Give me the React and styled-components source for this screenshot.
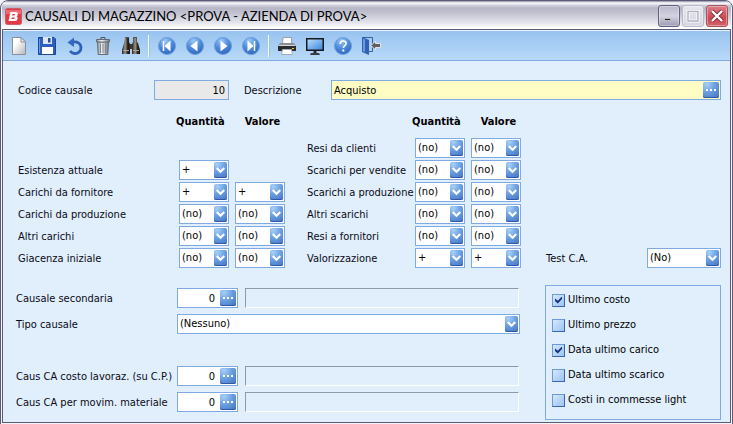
import React from "react";
import styled, { createGlobalStyle, css } from "styled-components";

const Global = createGlobalStyle`
  * { box-sizing: border-box; }
  body { margin: 0; background: #f4f4f8; }
  body, button, input, select {
    font-family: "DejaVu Sans Condensed", "Noto Sans", sans-serif;
    font-size: 11px;
    line-height: 14px;
    color: #000;
  }
`;

const line = "#7fabe2";

const Window = styled.div`
  display: flex;
  flex-direction: column;
  min-height: 100vh;
  border: 1px solid #5d5a78;
  border-radius: 8px 8px 0 0;
  background: #f6f6fa;
  padding: 0 1px 1px;
  overflow: hidden;
`;

const TitleBar = styled.header`
  display: flex;
  align-items: center;
  gap: 3px;
  height: 28px;
  padding: 2px 3px 0;
  background: linear-gradient(#8d8ba5 0, #ffffff 2px, #d4d4de 4px, #b6b6c8 7px, #c2c2d0 12px, #e6e6ee 22px, #ffffff 27px);
`;

const Title = styled.h1`
  flex: 1;
  margin: 0;
  font: 400 13px/18px Lato, "Noto Sans", sans-serif;
  white-space: nowrap;
`;

const WindowButton = styled.button`
  display: flex;
  align-items: center;
  justify-content: center;
  width: 22px;
  height: 22px;
  padding: 0;
  border: 1px solid ${(p) => (p.$tone === "close" ? "#a8505c" : p.$tone === "dim" ? "#b9b9c9" : "#62627e")};
  border-radius: 3px;
  background: ${(p) =>
    p.$tone === "close"
      ? "linear-gradient(#d9808a, #cb4850 60%, #d4626a)"
      : p.$tone === "dim"
        ? "linear-gradient(#e6e6ee, #d6d6e2)"
        : "linear-gradient(#b8b8cc, #d2d2e0 50%, #9c9cb4)"};
  box-shadow: inset 0 0 0 1px rgba(255, 255, 255, 0.35);
`;

const WindowButtons = styled.div`
  display: flex;
  gap: 2px;
`;

const Frame = styled.div`
  flex: 1;
  display: flex;
  flex-direction: column;
  border: 1px solid #5d5a78;
  background: #e1effd;
`;

const Toolbar = styled.nav`
  display: flex;
  align-items: center;
  height: 31px;
  padding-left: 2px;
  border-top: 1px solid #e8f3ff;
  border-bottom: 1px solid #7fabe2;
  background: linear-gradient(#98c3ef, #b8d9f9);
`;

const ToolButton = styled.button`
  display: flex;
  align-items: center;
  justify-content: center;
  width: 28px;
  height: 26px;
  padding: 0;
  border: 0;
  background: none;
`;

const Separator = styled.span`
  width: 2px;
  height: 22px;
  margin: 0 3px;
  border-left: 1px solid #f4faff;
  border-right: 1px solid #9fc4ec;
`;

const Form = styled.form`
  flex: 1;
  display: flex;
  flex-direction: column;
  padding: 19px 9px 2px 13px;
`;

const TopRow = styled.div`
  display: grid;
  grid-template-columns: 136px 75px 15px 87px 1fr;
  align-items: center;
  padding-left: 2px;
`;

const Label = styled.label`
  padding-top: 2px;
  white-space: nowrap;
  color: #0a0a14;
`;

const DescriptionLabel = styled(Label)`
  grid-column: 4;
`;

const fieldBox = css`
  width: 100%;
  height: 20px;
  margin: 0;
  border: 1px solid ${line};
  border-radius: 0;
  outline: 0;
  background: #fff;
`;

const TextBox = styled.input`
  ${fieldBox}
  padding: 0 ${(p) => (p.$lookup ? 22 : 3)}px 0 2px;
  text-align: ${(p) => p.$align || "left"};
  ${(p) => p.$tone === "locked" && "background: #e9e9e9;"}
  ${(p) => p.$tone === "active" && "background: #fffcc4;"}
`;

const FieldWrap = styled.div`
  position: relative;
  height: 20px;
  min-width: 0;
`;

const blueTile = css`
  position: absolute;
  top: 2px;
  right: 2px;
  display: flex;
  align-items: center;
  justify-content: center;
  height: 16px;
  padding: 0;
  border: 0;
  border-radius: 2px;
  background: radial-gradient(circle at 25% 15%, #a8d0f6 0, #6a9fe2 45%, #4272c0 100%);
  box-shadow: inset 0 -1px 0 #3158a8;
`;

const LookupButton = styled.button`
  ${blueTile}
  width: 16px;
`;

const ArrowTile = styled.span`
  ${blueTile}
  width: 13px;
  pointer-events: none;
`;

const NativeSelect = styled.select`
  ${fieldBox}
  appearance: none;
  padding: 0 16px 0 2px;
`;

const Matrices = styled.div`
  display: flex;
  align-items: flex-end;
  padding: 14px 0 0 2px;
`;

const Matrix = styled.section`
  display: flex;
  flex-direction: column;
  gap: 2px;
  margin-right: 22px;
`;

const MatrixHead = styled.div`
  display: flex;
  gap: 20px;
  height: 16px;
  margin-bottom: 6px;
  padding-left: ${(p) => p.$labelWidth + 3}px;
  font-weight: bold;
  line-height: 16px;
`;

const MatrixRow = styled.div`
  display: grid;
  grid-template-columns: ${(p) => p.$labelWidth}px 50px 50px;
  gap: 6px;
  align-items: center;
  height: 20px;
`;

const TestRow = styled.div`
  flex: 1;
  display: grid;
  grid-template-columns: 1fr 74px;
  align-items: center;
  padding-left: 3px;
`;

const Bottom = styled.div`
  display: grid;
  grid-template-columns: 1fr 176px;
  gap: 25px;
  margin-top: 17px;
`;

const Details = styled.div`
  display: flex;
  flex-direction: column;
  gap: 32px;
  padding-top: 3px;
`;

const DetailGroup = styled.div`
  display: flex;
  flex-direction: column;
  gap: 6px;
`;

const DetailRow = styled.div`
  display: grid;
  grid-template-columns: ${(p) => (p.$wide ? "161px 1fr" : "161px 61px 1fr")};
  align-items: center;
`;

const Display = styled.output`
  height: 20px;
  margin: 0 1px 0 7px;
  border: 1px solid;
  border-color: #8f9aa8 #fff #fff #8f9aa8;
`;

const Checks = styled.fieldset`
  display: flex;
  flex-direction: column;
  gap: 11px;
  min-width: 0;
  margin: 0;
  padding: 7px 6px 12px;
  border: 1px solid ${line};
`;

const CheckLabel = styled.label`
  display: flex;
  align-items: center;
  gap: 3px;
  height: 14px;
  white-space: nowrap;
`;

const CheckBox = styled.input`
  appearance: none;
  display: flex;
  justify-content: center;
  width: 13px;
  height: 13px;
  margin: 0;
  border: 1px solid #5284c8;
  border-color: #6a9adb #3565b4 #3565b4 #6a9adb;
  background: linear-gradient(135deg, #d4e8fc, #9cc4f0);
  &:checked::after {
    content: "";
    width: 7px;
    height: 7px;
    margin-top: 2px;
    background: #16307c;
    clip-path: polygon(0 30%, 40% 60%, 100% 0, 100% 35%, 40% 100%, 0 65%);
  }
`;

const Svg = ({ w = 20, h = 20, children }) => (
  <svg width={w} height={h} viewBox={`0 0 ${w} ${h}`} fill="none" aria-hidden="true">
    {children}
  </svg>
);

const DefsSvg = styled.svg`
  position: absolute;
`;

const Defs = () => (
  <DefsSvg width="0" height="0" aria-hidden="true">
    <defs>
      <linearGradient id="paper" x1="0" y1="0" x2="1" y2="1">
        <stop offset="0.3" stopColor="#fff" />
        <stop offset="1" stopColor="#b4b6bc" />
      </linearGradient>
      <linearGradient id="metal" x1="0" y1="0" x2="1" y2="0">
        <stop offset="0" stopColor="#8d949c" />
        <stop offset="0.4" stopColor="#f4f6f8" />
        <stop offset="1" stopColor="#6e757e" />
      </linearGradient>
      <linearGradient id="dark" x1="0" y1="0" x2="1" y2="0">
        <stop offset="0" stopColor="#25221f" />
        <stop offset="0.4" stopColor="#9b958a" />
        <stop offset="0.7" stopColor="#2c2824" />
        <stop offset="1" stopColor="#14110f" />
      </linearGradient>
      <linearGradient id="screen" x1="0" y1="0" x2="1" y2="1">
        <stop offset="0" stopColor="#b8dcff" />
        <stop offset="1" stopColor="#3f86dc" />
      </linearGradient>
      <radialGradient id="ball" cx="0.4" cy="0.2" r="0.85">
        <stop offset="0" stopColor="#9cc8f6" />
        <stop offset="0.5" stopColor="#4f8cdc" />
        <stop offset="1" stopColor="#2c62b8" />
      </radialGradient>
    </defs>
  </DefsSvg>
);

const NewIcon = () => (
  <Svg>
    <path d="M3.500 1.500H12L16.500 6V18.500H3.500Z" fill="url(#paper)" stroke="#8b8f97" />
    <path d="M12 1.500V6H16.500Z" fill="#e9ebee" stroke="#8b8f97" />
  </Svg>
);
const SaveIcon = () => (
  <Svg>
    <path d="M1.500 1.500H17L18.500 3V18.500H1.500Z" fill="#2b5fc0" stroke="#1f4797" />
    <path d="M2.500 3V17" stroke="#6c9ae6" />
    <path d="M6 1H15V8H6Z" fill="#dde6f2" />
    <path d="M11 2H13.500V6.500H11Z" fill="#244b9c" />
    <path d="M5 11H16V18H5Z" fill="#fff" />
  </Svg>
);
const UndoIcon = () => (
  <Svg>
    <path d="M7 6.300C12 4.800 16 7.500 16 11.800C16 15.500 13 17.800 9.500 17.500C7.500 17.300 6 16.300 5 15" stroke="#2f62b8" strokeWidth="2.800" />
    <path d="M2.500 6.500L9 1.500V11Z" fill="#3369c0" />
  </Svg>
);
const TrashIcon = () => (
  <Svg>
    <path d="M4.500 6H15.500L14.800 18.500H5.200Z" fill="url(#metal)" stroke="#646b74" />
    <path d="M7.500 7.500V17M10 7.500V17M12.500 7.500V17" stroke="#7c848e" />
    <path d="M3.500 3.500H16.500V6H3.500Z" fill="url(#metal)" stroke="#646b74" />
    <path d="M8 3V1.500H12V3" stroke="#4e555d" />
  </Svg>
);
const FindIcon = () => (
  <Svg>
    <path d="M4 2H8V6L9 8V18H1V14L3 7Z" fill="url(#dark)" />
    <path d="M12 2H16V6L17 7L19 14V18H11V8L12 6Z" fill="url(#dark)" />
    <path d="M8.500 8H11.500V13H8.500Z" fill="#3d3832" />
    <path d="M4 1.500H8M12 1.500H16" stroke="#5b554d" />
    <path d="M2 14.500H8M12 14.500H18" stroke="#aaa499" />
  </Svg>
);
const Ball = ({ children }) => (
  <Svg>
    <circle cx="10" cy="10" r="8.500" fill="url(#ball)" stroke="#6a9ee0" />
    {children}
  </Svg>
);
const FirstIcon = () => (
  <Ball>
    <path d="M13.500 4.500V15.500L7.500 10Z" fill="#fff" />
    <path d="M6.500 5V15" stroke="#fff" strokeWidth="1.500" />
  </Ball>
);
const PrevIcon = () => (
  <Ball>
    <path d="M12.500 4.500V15.500L5.500 10Z" fill="#fff" />
  </Ball>
);
const NextIcon = () => (
  <Ball>
    <path d="M7.500 4.500V15.500L14.500 10Z" fill="#fff" />
  </Ball>
);
const LastIcon = () => (
  <Ball>
    <path d="M6.500 4.500V15.500L12.500 10Z" fill="#fff" />
    <path d="M13.500 5V15" stroke="#fff" strokeWidth="1.500" />
  </Ball>
);
const PrintIcon = () => (
  <Svg>
    <path d="M6 1.500H14.500V8H5.500Z" fill="#fff" stroke="#9a9ea5" />
    <path d="M3 7H17L19 10V14H1V10Z" fill="#8c9096" />
    <path d="M1 10H19V15H1Z" fill="#2a2c30" />
    <path d="M2 9.500H18" stroke="#d5d8dc" />
    <path d="M15 12H17V13H15Z" fill="#d8d25a" />
    <path d="M5.500 13.500H14.500L15.500 18.500H4.500Z" fill="#fff" stroke="#a8acb2" />
  </Svg>
);
const ScreenIcon = () => (
  <Svg>
    <path d="M1 2H19V15H1Z" fill="#17191d" />
    <path d="M2.500 3.500H17.500V13.500H2.500Z" fill="url(#screen)" />
    <path d="M8.500 15H11.500V17H8.500Z" fill="#2a2c30" />
    <path d="M6 17H14L15 19H5Z" fill="#3a3c42" />
  </Svg>
);
const HelpIcon = () => (
  <Ball>
    <path d="M7.200 8C7.200 6 8.500 5 10.200 5C12 5 13.100 6.100 13.100 7.500C13.100 9.500 10.300 9.600 10.300 12" stroke="#fff" strokeWidth="1.600" />
    <path d="M9.300 13.500H11.300V15.500H9.300Z" fill="#fff" />
  </Ball>
);
const ExitIcon = () => (
  <Svg>
    <path d="M1.500 1.500H11.500V15.500H8" stroke="#3c5f9c" />
    <path d="M1 1L8 4V19L1 16Z" fill="#2e63b4" />
    <path d="M2 2.500L4 3.500V16L2 15.300Z" fill="#6d9be0" />
    <path d="M10 9.500L14.500 5V7.500H19.500V11.500H14.500V14Z" fill="#5e5e62" stroke="#e4e4e4" />
  </Svg>
);

const Chevron = () => (
  <Svg w={9} h={8}>
    <path d="M0.700 2L4.500 5.700L8.300 2" stroke="#fff" strokeWidth="2.200" />
  </Svg>
);
const Dots = () => (
  <Svg w={10} h={2}>
    <path d="M0 0H2V2H0ZM4 0H6V2H4ZM8 0H10V2H8Z" fill="#fff" />
  </Svg>
);

const LogoIcon = () => (
  <Svg w={17} h={17}>
    <rect x="0.500" y="0.500" width="16" height="16" rx="2" fill="#e23a44" stroke="#c8606a" />
    <path d="M1 2H16V6H1Z" fill="#ee6a70" />
    <path fillRule="evenodd" d="M5.500 4H11C13.500 4 13.500 7.500 11.500 8.200C13.600 9 12.800 13 10 13H3.500ZM7.500 6L7.200 7.500H9.600L10 6ZM6.800 9.500L6.500 11H9.300L9.800 9.500Z" fill="#fff" />
  </Svg>
);

const tools = [
  [["Nuovo", NewIcon], ["Salva", SaveIcon], ["Ripristina", UndoIcon], ["Elimina", TrashIcon], ["Cerca", FindIcon]],
  [["Primo", FirstIcon], ["Precedente", PrevIcon], ["Successivo", NextIcon], ["Ultimo", LastIcon]],
  [["Stampa", PrintIcon], ["Video", ScreenIcon], ["Guida", HelpIcon], ["Esci", ExitIcon]],
];

const carichi = [
  null,
  ["Esistenza attuale", "+"],
  ["Carichi da fornitore", "+", "+"],
  ["Carichi da produzione", "(no)", "(no)"],
  ["Altri carichi", "(no)", "(no)"],
  ["Giacenza iniziale", "(no)", "(no)"],
];

const scarichi = [
  ["Resi da clienti", "(no)", "(no)"],
  ["Scarichi per vendite", "(no)", "(no)"],
  ["Scarichi a produzione", "(no)", "(no)"],
  ["Altri scarichi", "(no)", "(no)"],
  ["Resi a fornitori", "(no)", "(no)"],
  ["Valorizzazione", "+", "+"],
];

const flags = [
  ["Ultimo costo", true],
  ["Ultimo prezzo", false],
  ["Data ultimo carico", true],
  ["Data ultimo scarico", false],
  ["Costi in commesse light", false],
];

function Select({ id, value, label }) {
  return (
    <FieldWrap>
      <NativeSelect id={id} aria-label={label} defaultValue={value}>
        <option>{value}</option>
      </NativeSelect>
      <ArrowTile>
        <Chevron />
      </ArrowTile>
    </FieldWrap>
  );
}

function Lookup({ id, name, ...rest }) {
  return (
    <FieldWrap>
      <TextBox id={id} $lookup {...rest} />
      <LookupButton type="button" aria-label={`Cerca ${name}`}>
        <Dots />
      </LookupButton>
    </FieldWrap>
  );
}

function MatrixBlock({ prefix, rows, labelWidth }) {
  return (
    <Matrix>
      <MatrixHead $labelWidth={labelWidth}>
        <span>Quantità</span>
        <span>Valore</span>
      </MatrixHead>
      {rows.map((row, i) => (
        <MatrixRow key={i} $labelWidth={labelWidth}>
          {row && <Label htmlFor={`${prefix}${i}`}>{row[0]}</Label>}
          {row && <Select id={`${prefix}${i}`} value={row[1]} />}
          {row && row[2] && <Select value={row[2]} label={`${row[0]} valore`} />}
        </MatrixRow>
      ))}
    </Matrix>
  );
}

function CodeRow({ id, label }) {
  return (
    <DetailRow>
      <Label htmlFor={id}>{label}</Label>
      <Lookup id={id} name={label} defaultValue="0" $align="right" />
      <Display htmlFor={id} />
    </DetailRow>
  );
}

export default function App() {
  return (
    <>
      <Global />
      <Defs />
      <Window>
        <TitleBar>
          <LogoIcon />
          <Title>CAUSALI DI MAGAZZINO &lt;PROVA - AZIENDA DI PROVA&gt;</Title>
          <WindowButtons>
            <WindowButton aria-label="Riduci a icona">
              <Svg w={14} h={14}>
                <path d="M2.500 9.500H8.500V11.500H2.500Z" fill="#222" stroke="#fff" strokeWidth="0.500" />
              </Svg>
            </WindowButton>
            <WindowButton $tone="dim" aria-label="Ingrandisci">
              <Svg w={14} h={14}>
                <path d="M2 2.500H12V12H2Z" stroke="#fff" strokeWidth="3" />
                <path d="M2 2.500H12V12H2Z" stroke="#b0b0be" strokeWidth="1.400" />
              </Svg>
            </WindowButton>
            <WindowButton $tone="close" aria-label="Chiudi">
              <Svg w={14} h={14}>
                <path d="M2 2L12 12M12 2L2 12" stroke="#7c3038" strokeWidth="4" />
                <path d="M2 2L12 12M12 2L2 12" stroke="#fff" strokeWidth="2.400" />
              </Svg>
            </WindowButton>
          </WindowButtons>
        </TitleBar>
        <Frame>
          <Toolbar>
            {tools.map((group, g) => (
              <React.Fragment key={g}>
                {g > 0 && <Separator />}
                {group.map(([name, Icon]) => (
                  <ToolButton key={name} aria-label={name}>
                    <Icon />
                  </ToolButton>
                ))}
              </React.Fragment>
            ))}
          </Toolbar>
          <Form>
            <TopRow>
              <Label htmlFor="codice">Codice causale</Label>
              <TextBox id="codice" defaultValue="10" readOnly $align="right" $tone="locked" />
              <DescriptionLabel htmlFor="descrizione">Descrizione</DescriptionLabel>
              <Lookup id="descrizione" name="Descrizione" defaultValue="Acquisto" $tone="active" />
            </TopRow>
            <Matrices>
              <MatrixBlock prefix="carico" rows={carichi} labelWidth={155} />
              <MatrixBlock prefix="scarico" rows={scarichi} labelWidth={102} />
              <TestRow>
                <Label htmlFor="test">Test C.A.</Label>
                <Select id="test" value="(No)" />
              </TestRow>
            </Matrices>
            <Bottom>
              <Details>
                <DetailGroup>
                  <CodeRow id="secondaria" label="Causale secondaria" />
                  <DetailRow $wide>
                    <Label htmlFor="tipo">Tipo causale</Label>
                    <Select id="tipo" value="(Nessuno)" />
                  </DetailRow>
                </DetailGroup>
                <DetailGroup>
                  <CodeRow id="lavoraz" label="Caus CA costo lavoraz. (su C.P.)" />
                  <CodeRow id="materiale" label="Caus CA per movim. materiale" />
                </DetailGroup>
              </Details>
              <Checks>
                {flags.map(([name, on]) => (
                  <CheckLabel key={name}>
                    <CheckBox type="checkbox" defaultChecked={on} />
                    {name}
                  </CheckLabel>
                ))}
              </Checks>
            </Bottom>
          </Form>
        </Frame>
      </Window>
    </>
  );
}
